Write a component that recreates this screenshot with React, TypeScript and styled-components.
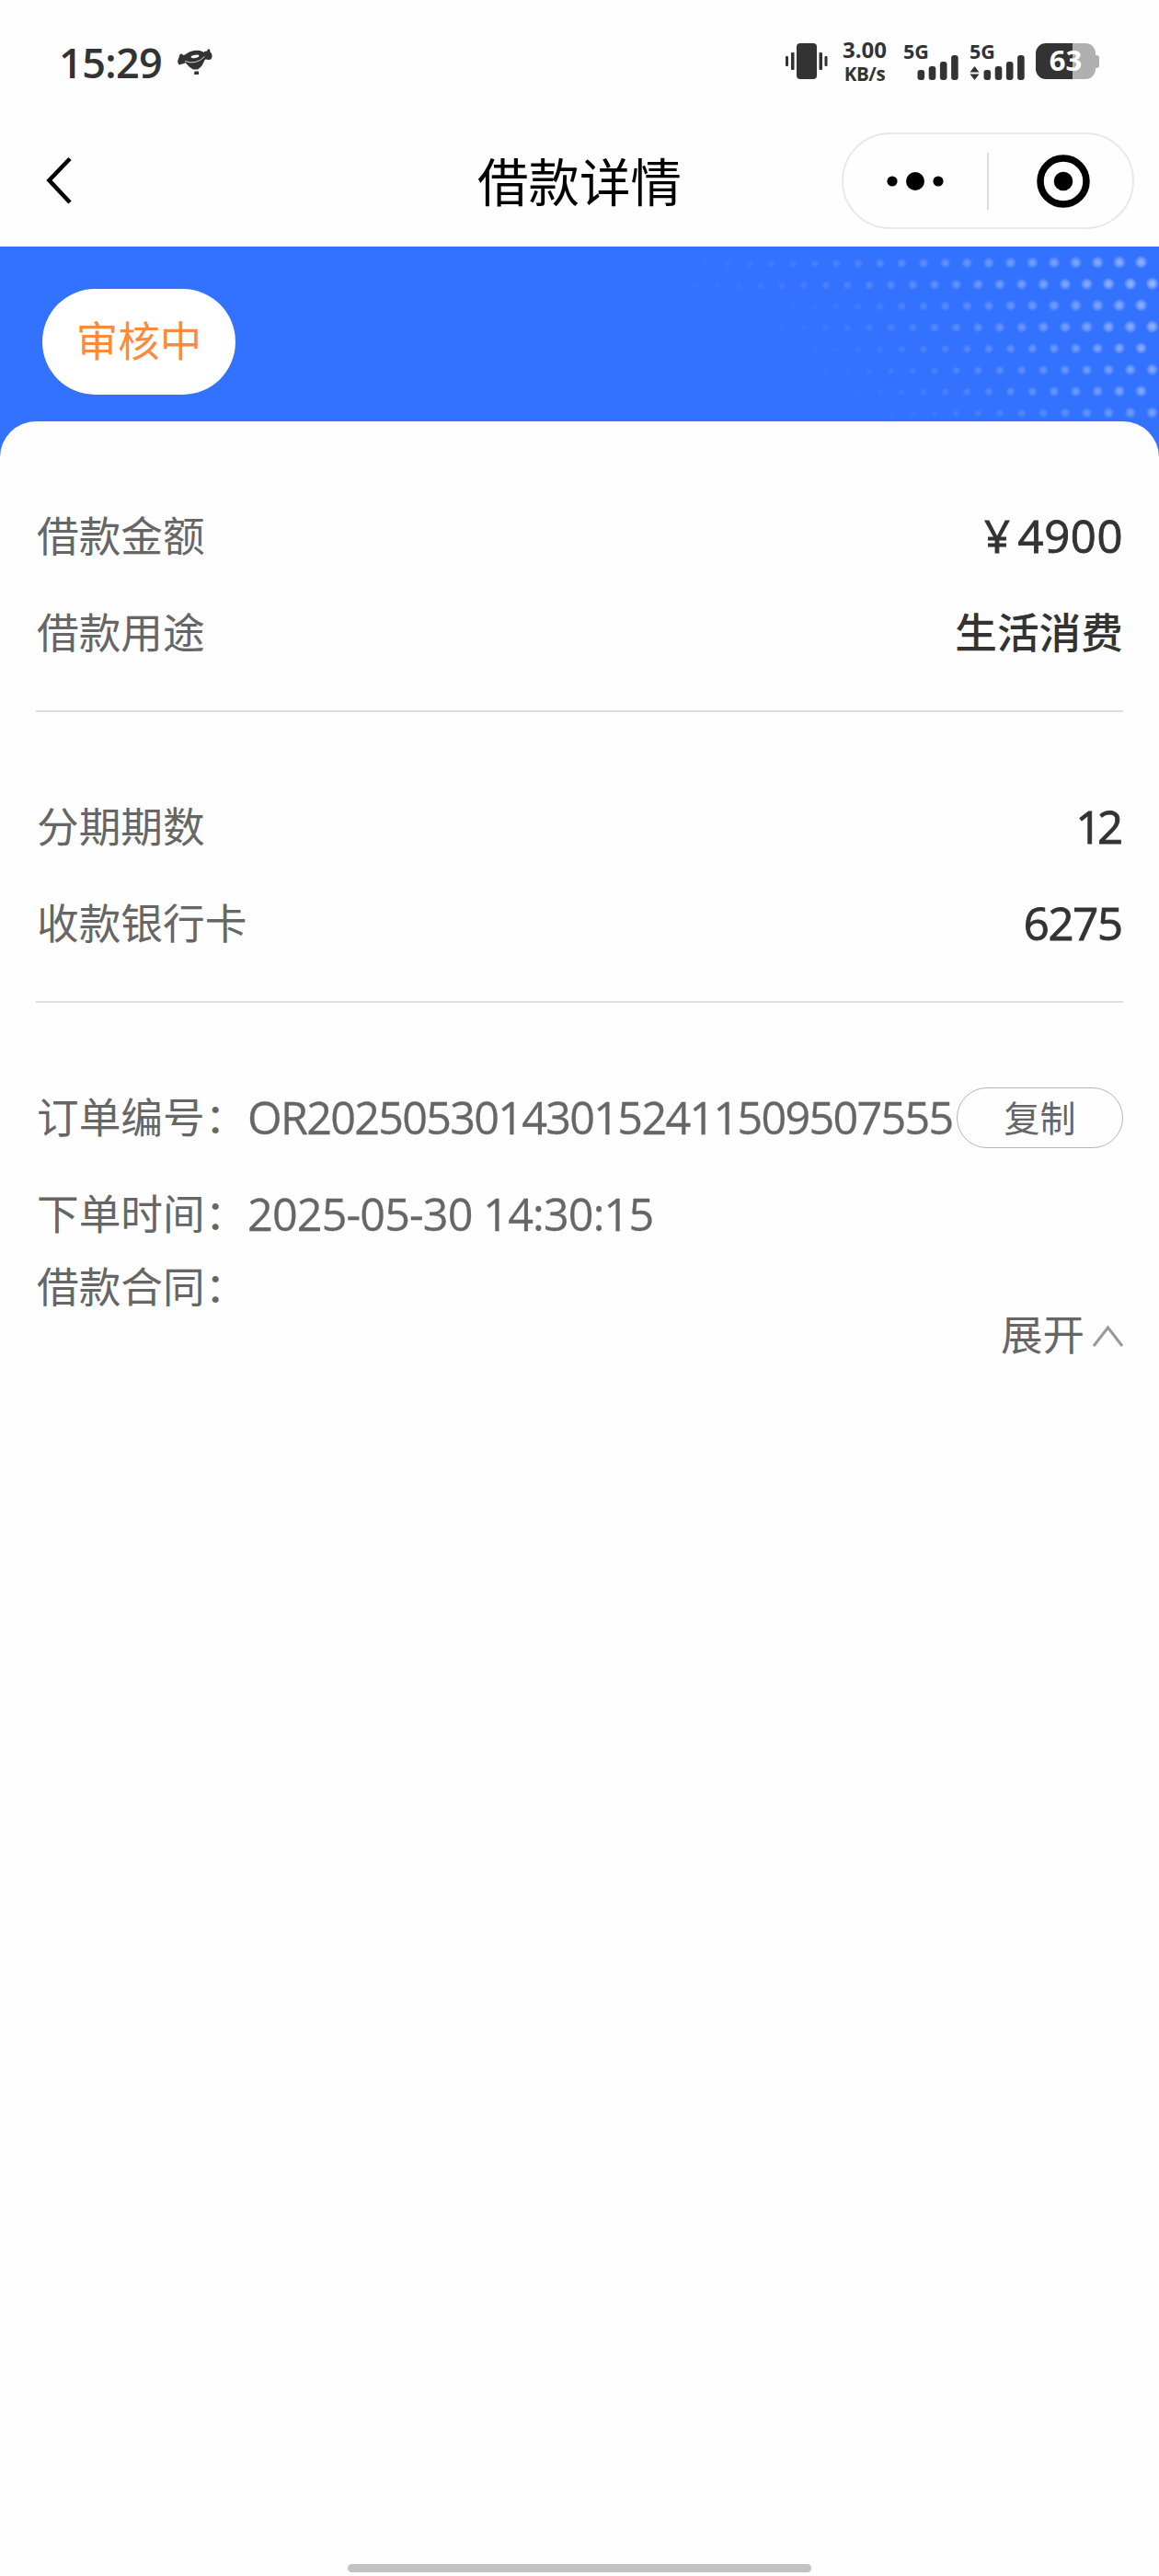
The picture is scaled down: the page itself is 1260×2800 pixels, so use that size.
import React from 'react';
import styled, { createGlobalStyle, css } from 'styled-components';

const Global = createGlobalStyle`
  * { box-sizing: border-box; }
  body {
    margin: 0;
    background: #fefefe;
    font-family: 'Open Sans', 'Noto Sans CJK SC', sans-serif;
  }
  button { font-family: inherit; background: none; border: 0; padding: 0; margin: 0; }
`;

const Screen = styled.div`
  width: 1260px;
  height: 2800px;
  display: flex;
  flex-direction: column;
  background: #fefefe;
  overflow: hidden;
`;

const StatusBar = styled.header`
  height: 134px;
  display: flex;
  justify-content: space-between;
  align-items: flex-start;
  padding: 45px 65px 0 64px;
  color: #333;
`;

const StatusGroup = styled.div<{ $gap: number }>`
  display: flex;
  align-items: flex-start;
  gap: ${(p) => p.$gap}px;
`;

const Clock = styled.span`
  width: 109px;
  font-size: 45px;
  font-weight: 600;
  line-height: 45px;
  letter-spacing: -0.6px;
  white-space: nowrap;
`;

const CandyIcon = styled.svg`
  margin-top: 8px;
  display: block;
`;

const Speed = styled.div`
  width: 50px;
  margin: -4px 5px 0 -1px;
  display: flex;
  flex-direction: column;
  align-items: center;
  font-weight: 700;
  white-space: nowrap;
`;

const SpeedValue = styled.span`
  font-size: 24px;
  line-height: 26px;
`;

const SpeedUnit = styled.span`
  font-size: 20.5px;
  line-height: 26px;
  letter-spacing: -0.4px;
`;

const Signal = styled.div`
  width: 60px;
  height: 42px;
  position: relative;
`;

const SignalLabel = styled.span`
  display: block;
  padding-top: 1px;
  font-size: 21.5px;
  line-height: 20px;
  font-weight: 700;
`;

const SignalBars = styled.svg`
  position: absolute;
  left: 0;
  top: 0;
`;

const Battery = styled.div`
  display: flex;
  align-items: center;
  margin-top: 2px;
`;

const BatteryBody = styled.div`
  width: 65px;
  height: 39px;
  border-radius: 11px;
  background: linear-gradient(90deg, #333 0 62%, #b0b0b0 62%);
  color: #fff;
  font-size: 31px;
  font-weight: 700;
  line-height: 36px;
  text-align: center;
`;

const BatteryCap = styled.i`
  width: 4px;
  height: 14px;
  border-radius: 0 3px 3px 0;
  background: #b0b0b0;
`;

const NavBar = styled.nav`
  height: 134px;
  display: grid;
  grid-template-columns: 345px 1fr 345px;
  align-items: start;
  padding: 10px 27px 0;
`;

const BackButton = styled.button`
  display: block;
  width: 60px;
  height: 104px;
  padding-left: 22px;
  svg { display: block; }
`;

const Title = styled.h1`
  margin: 0;
  text-align: center;
  font-size: 55.5px;
  font-weight: 400;
  line-height: 107px;
  color: #000;
`;

const Capsule = styled.div`
  justify-self: end;
  width: 318px;
  height: 105px;
  border: 2px solid #e8e8e8;
  border-radius: 53px;
  display: grid;
  grid-template-columns: 156px 2px 1fr;
  align-items: center;
`;

const CapsuleButton = styled.button<{ $inset?: number }>`
  display: flex;
  justify-content: center;
  align-items: center;
  padding-left: ${(p) => p.$inset ?? 0}px;
`;

const CapsuleRule = styled.i`
  width: 2px;
  height: 62px;
  background: #ddd;
`;

const Hero = styled.section`
  position: relative;
  height: 230px;
  flex: none;
  padding: 46px;
  background: #3371ff;
`;

const DotPattern = styled.svg`
  position: absolute;
  right: 0;
  top: 0;
`;

const StatusPill = styled.div`
  width: 210px;
  height: 115px;
  border-radius: 58px;
  background: #fff;
  color: #fb8b3c;
  font-size: 45.5px;
  line-height: 112px;
  text-align: center;
`;

const Card = styled.main`
  position: relative;
  flex: 1;
  margin-top: -40px;
  border-radius: 39px 39px 0 0;
  background: #fefefe;
  padding: 69px 39px 0;
`;

const Group = styled.section<{ $ruled?: boolean }>`
  ${(p) =>
    p.$ruled &&
    css`
      height: 247px;
      border-bottom: 2px solid #dedede;
      margin-bottom: 69px;
    `}
`;

const Row = styled.div<{ $h?: number }>`
  height: ${(p) => p.$h ?? 105}px;
  display: flex;
  align-items: center;
  padding-left: 1px;
  font-size: 45.7px;
  color: #666;
  white-space: nowrap;
`;

const Label = styled.span`
  width: 229px;
  flex: none;
`;

const Value = styled.span`
  margin-left: auto;
  color: #333;
  font-weight: 500;
`;

const NumberValue = styled(Value)<{ $track: number }>`
  display: flex;
  gap: 8px;
  font-size: 49px;
  letter-spacing: ${(p) => p.$track}px;
  margin-right: ${(p) => (p.$track > 0 ? 0 : -p.$track)}px;
  padding-top: 4px;
  -webkit-text-stroke: 0.9px #333;
`;

const Detail = styled.span<{ $track: number }>`
  padding-top: 4px;
  font-size: 48.5px;
  letter-spacing: ${(p) => p.$track}px;
  -webkit-text-stroke: 0.3px #666;
`;

const CopyButton = styled.button`
  flex: none;
  margin: 6px 0 0 auto;
  width: 181px;
  height: 66px;
  border: 1px solid #b5b5b5;
  border-radius: 33px;
  color: #666;
  font-size: 39px;
  line-height: 59px;
`;

const Toggle = styled.button`
  display: flex;
  align-items: center;
  gap: 9px;
  margin-left: auto;
  height: 54px;
  color: #666;
  font-size: 45.5px;
  line-height: 54px;
  svg { margin-top: 3px; }
`;

const HomeBar = styled.div`
  width: 504px;
  height: 9px;
  flex: none;
  align-self: center;
  margin-bottom: 4px;
  border-radius: 5px;
  background: #c2c2c2;
`;

const dots = Array.from({ length: 8 }, (_, row) => {
  const start = row % 2 ? 552.5 : 540.5;
  const count = [23, 23, 18, 19, 17, 17, 15, 14][row];
  const peak = [0.46, 0.5, 0.44, 0.46, 0.42, 0.4, 0.4, 0.34][row];
  return Array.from({ length: count }, (_, i) => {
    const fade = 1 - i / count;
    return {
      x: start - i * 23.65,
      y: 17 + row * 23.35 + i * 0.11,
      r: (row < 4 ? 4.2 : 3.6) + 3.2 * fade,
      o: peak * Math.pow(fade, 1.35),
    };
  });
}).flat();

function SignalMeter({ data }: { data?: boolean }) {
  return (
    <Signal>
      <SignalLabel>5G</SignalLabel>
      <SignalBars width="62" height="44" fill="#333">
        {data && <path d="M5.500 27l5 6.500h-10zM5.500 42l5-6.500h-10z" />}
        {[0, 1, 2, 3].map((i) => {
          const h = [11, 15, 20, 27][i];
          return <rect key={i} x={15.5 + i * 12.2} y={42 - h} width="7.6" height={h} rx="3" />;
        })}
      </SignalBars>
    </Signal>
  );
}

export default function App() {
  return (
    <>
      <Global />
      <Screen>
        <StatusBar>
          <StatusGroup $gap={20}>
            <Clock>15:29</Clock>
            <CandyIcon width="38" height="29" viewBox="0 0 38 29" fill="#333">
              <path d="M2.500 6q3-1.500 3.500 1l3-.500 1 8-3 1.500-5 1.500Q0 17 .3 13zM29 3l3-.500q1-3 3-2l.500 3q2.500 2 2 5-.500 4-4 3.500l-5-1z" />
              <ellipse cx="19" cy="9.300" rx="12.500" ry="7.300" transform="rotate(-8 19 9.3)" />
              <path d="M8 14q3 5 9 8.500h5q6-4 8-12z" />
              <path d="M8 13.500q12 4.500 21.500-5" stroke="#fefefe" strokeWidth=".8" fill="none" />
              <ellipse cx="19" cy="8.300" rx="4.500" ry="1.600" fill="#fefefe" transform="rotate(-10 19 8.3)" />
              <path d="M18.500 24.500h4.500v3.500h-5z" />
            </CandyIcon>
          </StatusGroup>
          <StatusGroup $gap={15}>
            <svg width="48" height="42" fill="#333">
              <rect x="1" y="16" width="3" height="11" rx="1" />
              <rect x="7" y="12" width="3.500" height="19" rx="1" />
              <rect x="13" y="2" width="22" height="39" rx="4" />
              <rect x="37.500" y="12" width="3.500" height="19" rx="1" />
              <rect x="43.500" y="16" width="3" height="11" rx="1" />
            </svg>
            <StatusGroup $gap={12}>
              <Speed>
                <SpeedValue>3.00</SpeedValue>
                <SpeedUnit>KB/s</SpeedUnit>
              </Speed>
              <SignalMeter />
              <SignalMeter data />
              <Battery>
                <BatteryBody>63</BatteryBody>
                <BatteryCap />
              </Battery>
            </StatusGroup>
          </StatusGroup>
        </StatusBar>

        <NavBar>
          <BackButton aria-label="返回">
            <svg width="30" height="104" fill="none" stroke="#000" strokeWidth="4.600">
              <path d="M27 28.500L4.500 52 27 76" />
            </svg>
          </BackButton>
          <Title>借款详情</Title>
          <Capsule>
            <CapsuleButton aria-label="更多">
              <svg width="62" height="20">
                <circle cx="6" cy="10" r="5.600" />
                <circle cx="31" cy="10" r="10" />
                <circle cx="56" cy="10" r="5.600" />
              </svg>
            </CapsuleButton>
            <CapsuleRule />
            <CapsuleButton aria-label="关闭" $inset={5}>
              <svg width="58" height="58">
                <circle cx="29" cy="29" r="25" fill="none" stroke="#000" strokeWidth="7.500" />
                <circle cx="29" cy="29" r="10.300" />
              </svg>
            </CapsuleButton>
          </Capsule>
        </NavBar>

        <Hero>
          <DotPattern width="560" height="190">
            <defs>
              <radialGradient id="glow">
                <stop offset="0" stopColor="#fff" />
                <stop offset=".4" stopColor="#fff" stopOpacity=".8" />
                <stop offset="1" stopColor="#fff" stopOpacity="0" />
              </radialGradient>
            </defs>
            {dots.map((d, i) => (
              <circle key={i} cx={d.x} cy={d.y} r={d.r} fill="url(#glow)" opacity={d.o} />
            ))}
          </DotPattern>
          <StatusPill>审核中</StatusPill>
        </Hero>

        <Card>
          <Group $ruled>
            <Row>
              <Label>借款金额</Label>
              <NumberValue $track={0.6}>
                <span>¥</span>
                <span>4900</span>
              </NumberValue>
            </Row>
            <Row>
              <Label>借款用途</Label>
              <Value>生活消费</Value>
            </Row>
          </Group>
          <Group $ruled>
            <Row>
              <Label>分期期数</Label>
              <NumberValue $track={-4.5}>12</NumberValue>
            </Row>
            <Row>
              <Label>收款银行卡</Label>
              <NumberValue $track={-1.3}>6275</NumberValue>
            </Row>
          </Group>
          <Group>
            <Row>
              <Label>订单编号：</Label>
              <Detail $track={-1.72}>OR202505301430152411509507555</Detail>
              <CopyButton>复制</CopyButton>
            </Row>
            <Row>
              <Label>下单时间：</Label>
              <Detail $track={-0.85}>2025-05-30 14:30:15</Detail>
            </Row>
            <Row $h={54}>
              <Label>借款合同：</Label>
            </Row>
            <Toggle>
              展开
              <svg width="33" height="24" fill="none" stroke="#999" strokeWidth="3">
                <path d="M1 23L16.500 3 32 23" />
              </svg>
            </Toggle>
          </Group>
        </Card>
        <HomeBar />
      </Screen>
    </>
  );
}
